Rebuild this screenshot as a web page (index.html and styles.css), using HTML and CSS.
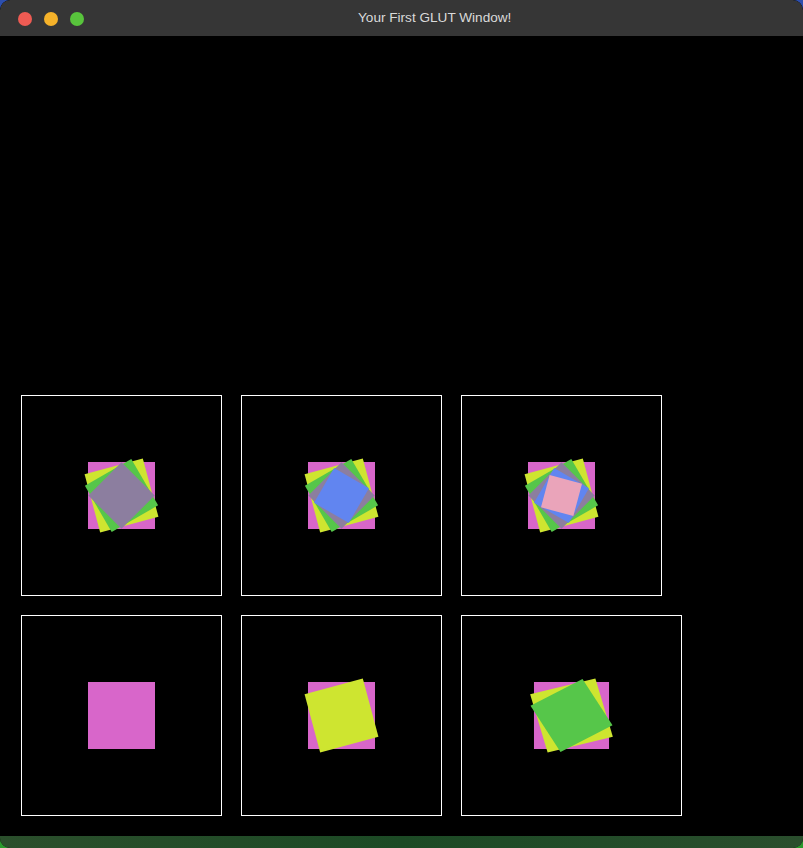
FILE: index.html
```html
<!DOCTYPE html>
<html>
<head>
<meta charset="utf-8">
<title>Your First GLUT Window!</title>
<link rel="stylesheet" href="styles.css">
</head>
<body>
<div class="window">
  <div class="titlebar">
    <div class="lights">
      <span class="light red"></span>
      <span class="light amber"></span>
      <span class="light green"></span>
    </div>
    <div class="title">Your First GLUT Window!</div>
  </div>
  <div class="canvas">
    <div class="grid">
      <div class="row">
        <div class="panel">
          <div class="stage">
            <div class="sq pink"></div>
            <div class="sq yellow s1"></div>
            <div class="sq lime s2"></div>
            <div class="sq mauve s3"></div>
          </div>
        </div>
        <div class="panel">
          <div class="stage">
            <div class="sq pink"></div>
            <div class="sq yellow s1"></div>
            <div class="sq lime s2"></div>
            <div class="sq mauve s3"></div>
            <div class="sq blue s4"></div>
          </div>
        </div>
        <div class="panel">
          <div class="stage">
            <div class="sq pink"></div>
            <div class="sq yellow s1"></div>
            <div class="sq lime s2"></div>
            <div class="sq mauve s3"></div>
            <div class="sq blue s4"></div>
            <div class="sq rose s5"></div>
          </div>
        </div>
      </div>
      <div class="row">
        <div class="panel">
          <div class="stage">
            <div class="sq pink"></div>
          </div>
        </div>
        <div class="panel">
          <div class="stage">
            <div class="sq pink"></div>
            <div class="sq yellow s1"></div>
          </div>
        </div>
        <div class="panel wide">
          <div class="stage stretch">
            <div class="sq pink"></div>
            <div class="sq yellow s1"></div>
            <div class="sq lime s2"></div>
          </div>
        </div>
      </div>
    </div>
  </div>
  <div class="footer"></div>
</div>
</body>
</html>
```

FILE: styles.css
```css
html, body {
  margin: 0;
  padding: 0;
}
body {
  width: 803px;
  height: 848px;
  overflow: hidden;
  background: linear-gradient(to bottom, #2d4fae 0px, #2d4fae 40px, #1f3a5a 400px, #2a9a2c 848px);
}
.window {
  width: 803px;
  height: 848px;
  border-radius: 10px;
  overflow: hidden;
  display: flex;
  flex-direction: column;
  background: #000;
}
.titlebar {
  height: 36px;
  flex: none;
  background: #363636;
  display: flex;
  align-items: center;
  position: relative;
  border-top-left-radius: 10px;
  border-top-right-radius: 10px;
}
.lights {
  display: flex;
  gap: 12px;
  padding-left: 18px;
  padding-top: 2px;
}
.light {
  width: 14px;
  height: 14px;
  border-radius: 50%;
  display: block;
}
.red { background: #ee5b53; }
.amber { background: #f5b22a; }
.green { background: #58c43c; }
.title {
  position: absolute;
  left: 358px;
  top: 10px;
  font-family: "Liberation Sans", Arial, sans-serif;
  font-size: 13.6px;
  color: #dadada;
  white-space: nowrap;
}
.canvas {
  height: 800px;
  flex: none;
  background: #000;
  display: flex;
  flex-direction: column;
  justify-content: flex-end;
  padding: 0 0 20px 21px;
  box-sizing: border-box;
}
.grid {
  display: flex;
  flex-direction: column;
  gap: 19px;
}
.row {
  display: flex;
  gap: 19px;
}
.panel {
  width: 201px;
  height: 201px;
  box-sizing: border-box;
  border: 1px solid #ffffff;
  display: grid;
  place-items: center;
  background: #000;
}
.panel.wide {
  width: 221px;
}
.stage {
  width: 67px;
  height: 67px;
  display: grid;
  place-items: center;
}
.stage.stretch {
  transform: scaleX(1.12);
}
.sq {
  grid-area: 1 / 1;
  width: 67px;
  height: 67px;
}
.pink { background: #d866ca; }
.yellow { background: #cee530; }
.lime { background: #56c64a; }
.mauve { background: #8c7e9f; }
.blue { background: #6185f0; }
.rose { background: #eaa4ba; }
.s1 { transform: rotate(-15deg) scale(0.9); }
.s2 { transform: rotate(-30deg) scale(0.8); }
.s3 { transform: rotate(-45deg) scale(0.7); }
.s4 { transform: rotate(-60deg) scale(0.6); }
.s5 { transform: rotate(-75deg) scale(0.5); }
.footer {
  height: 12px;
  flex: none;
  background: linear-gradient(to right, #2b4f2c, #1c4a25 50%, #2a4e2d);
}
```
